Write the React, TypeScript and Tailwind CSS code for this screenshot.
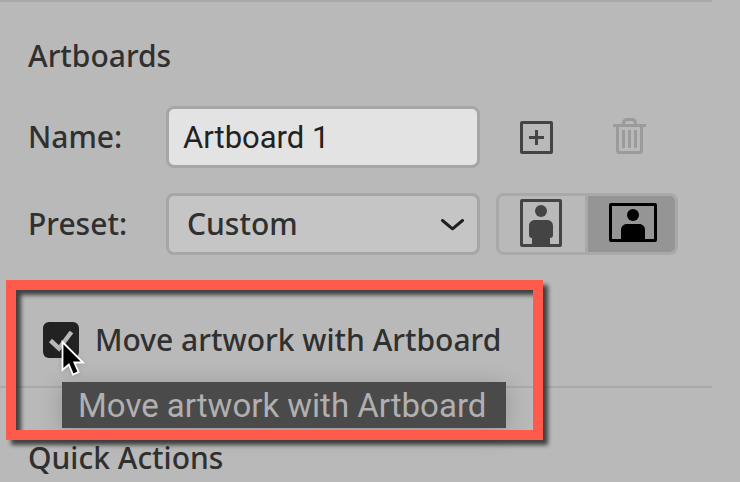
import React, { useState } from 'react';

const ChevronIcon: React.FC = () => (
    <svg
        className="pointer-events-none absolute right-4 top-[26px]"
        width="24"
        height="14"
        viewBox="0 0 24 14"
        fill="none"
        aria-hidden="true"
    >
        <path d="M2.5 1.5L12.5 9.8L22.5 1.5" stroke="#1f1f1f" strokeWidth="3" strokeLinecap="round" strokeLinejoin="round" />
    </svg>
);

const NewArtboardIcon: React.FC = () => (
    <svg width="33" height="33" viewBox="0 0 33 33" fill="none" aria-hidden="true">
        <rect x="1.5" y="1.5" width="30" height="30" rx="0.5" stroke="#444444" strokeWidth="3" />
        <path d="M16.5 9V24M9 16.5H24" stroke="#444444" strokeWidth="3" />
    </svg>
);

const TrashIcon: React.FC = () => (
    <svg width="33" height="38" viewBox="0 0 33 38" fill="none" stroke="#9b9b9b" strokeWidth="3" aria-hidden="true">
        <path d="M0 7.5H33" />
        <path d="M10.5 7.5V5.5C10.5 3 12 1.5 14.5 1.5H18.5C21 1.5 22.5 3 22.5 5.5V7.5" />
        <path d="M4.5 7.5V32.5C4.5 33.8 5.2 34.5 6.5 34.5H26.5C27.8 34.5 28.5 33.8 28.5 32.5V7.5" />
        <path d="M10.5 12V30M16.5 12V30M22.5 12V30" />
    </svg>
);

const PortraitIcon: React.FC = () => (
    <svg width="42" height="48" viewBox="0 0 42 48" fill="#444444" aria-hidden="true">
        <rect x="1.5" y="1.5" width="39" height="45" rx="0.5" fill="none" stroke="#444444" strokeWidth="3" />
        <circle cx="21" cy="12" r="6" />
        <path d="M15 21H27C30.5 21 33 23.5 33 27V36C33 38 32 39 30 39V46H12V39C10 39 9 38 9 36V27C9 23.5 11.5 21 15 21Z" />
    </svg>
);

const LandscapeIcon: React.FC = () => (
    <svg width="48" height="39" viewBox="0 0 48 39" fill="#000000" aria-hidden="true">
        <rect x="1.5" y="1.5" width="45" height="36" rx="0.5" fill="none" stroke="#000000" strokeWidth="3" />
        <circle cx="24" cy="12" r="6" />
        <path d="M18 21H30C33.5 21 36 23.5 36 27V38H12V27C12 23.5 14.5 21 18 21Z" />
    </svg>
);

const CheckIcon: React.FC = () => (
    <svg
        className="pointer-events-none absolute inset-0"
        width="36"
        height="36"
        viewBox="0 0 36 36"
        fill="none"
        aria-hidden="true"
    >
        <path d="M7.5 18.5L16 26.5L28.5 10" stroke="#b9b9b9" strokeWidth="4.5" />
    </svg>
);

const PointerIcon: React.FC = () => (
    <svg
        className="pointer-events-none absolute left-[18px] top-[17px] z-20 drop-shadow-sm"
        width="24"
        height="38"
        viewBox="0 0 24 38"
        aria-hidden="true"
    >
        <path
            d="M1.5 3V31L7.8 25.5L12 35.5L17.5 33L13.3 23.5H22Z"
            fill="#000000"
            stroke="#ffffff"
            strokeWidth="1.8"
        />
    </svg>
);

const App: React.FC = () => {
    const [name, setName] = useState('Artboard 1');
    const [preset, setPreset] = useState('Custom');
    const [orientation, setOrientation] = useState('landscape');
    const [moveArtwork, setMoveArtwork] = useState(true);

    return (
        <main className="min-h-screen overflow-hidden bg-[#b9b9b9] pr-7 font-['Noto_Sans',sans-serif] text-[30px] font-medium leading-9 text-[#303030]">
            <section className="border-y-2 border-[#a9a9a9] pb-7 pl-7 pt-9">
                <h2>Artboards</h2>

                <div className="mt-8 flex flex-col gap-[25px] pr-[34px]">
                    {/* Name */}
                    <div className="flex h-[62px] items-center gap-4">
                        <label htmlFor="name" className="-mr-4 w-[138px] shrink-0">
                            Name:
                        </label>
                        <input
                            id="name"
                            value={name}
                            onChange={(e) => setName(e.target.value)}
                            className="h-full min-w-0 flex-1 rounded-lg border-3 border-[#a6a6a6] bg-[#e3e3e3] px-[14px] font-[Roboto,sans-serif] text-[31px] font-normal text-[#222222] outline-none"
                        />
                        <div className="flex w-[182px] shrink-0 items-center justify-between pl-6 pr-8">
                            <button type="button" aria-label="New artboard">
                                <NewArtboardIcon />
                            </button>
                            <button type="button" aria-label="Delete artboard">
                                <TrashIcon />
                            </button>
                        </div>
                    </div>

                    {/* Preset */}
                    <div className="flex h-[62px] items-center gap-4">
                        <label htmlFor="preset" className="-mr-4 w-[138px] shrink-0">
                            Preset:
                        </label>
                        <div className="relative h-full min-w-0 flex-1">
                            <select
                                id="preset"
                                value={preset}
                                onChange={(e) => setPreset(e.target.value)}
                                className="h-full w-full appearance-none rounded-lg border-3 border-[#a6a6a6] bg-[#c5c5c5] px-[18px] outline-none"
                            >
                                <option>Custom</option>
                            </select>
                            <ChevronIcon />
                        </div>
                        <div className="flex h-full w-[182px] shrink-0 overflow-hidden rounded-lg border-3 border-[#a9a9a9]">
                            <button
                                type="button"
                                aria-label="Portrait"
                                aria-pressed={orientation === 'portrait'}
                                onClick={() => setOrientation('portrait')}
                                className="flex flex-1 items-center justify-center border-r-3 border-[#a9a9a9] bg-[#b9b9b9] pb-0.5 pr-0.5 aria-pressed:bg-[#959595]"
                            >
                                <PortraitIcon />
                            </button>
                            <button
                                type="button"
                                aria-label="Landscape"
                                aria-pressed={orientation === 'landscape'}
                                onClick={() => setOrientation('landscape')}
                                className="flex flex-1 items-center justify-center bg-[#b9b9b9] pb-1 pl-1 aria-pressed:bg-[#959595]"
                            >
                                <LandscapeIcon />
                            </button>
                        </div>
                    </div>
                </div>

                {/* Move artwork option with its tooltip and highlight */}
                <div className="relative mt-[67px] flex w-fit items-center gap-4 pl-[15px]">
                    <div className="relative size-9">
                        <input
                            id="move"
                            type="checkbox"
                            checked={moveArtwork}
                            onChange={(e) => setMoveArtwork(e.target.checked)}
                            className="block size-9 appearance-none rounded-md bg-[#222222]"
                        />
                        {moveArtwork && <CheckIcon />}
                        <PointerIcon />
                    </div>
                    <label htmlFor="move">Move artwork with Artboard</label>

                    <div
                        role="tooltip"
                        className="absolute left-[34px] top-[60px] z-10 whitespace-nowrap bg-[#4a4a4a] pb-1 pl-4 pr-5 pt-1.5 font-[Roboto,sans-serif] text-[33px] font-normal text-[#b0b0b0] shadow-[0_4px_24px_rgba(0,0,0,0.2)]"
                    >
                        Move artwork with Artboard
                    </div>
                    <div className="pointer-events-none absolute -left-[22px] -right-[42px] -top-[42px] z-10 h-40 border-10 border-[#ff5a4b] drop-shadow-[5px_5px_2px_rgba(0,0,0,0.65)]" />
                </div>
            </section>

            <section className="pl-7 pt-[52px]">
                <h2>Quick Actions</h2>
            </section>
        </main>
    );
};

export default App;
